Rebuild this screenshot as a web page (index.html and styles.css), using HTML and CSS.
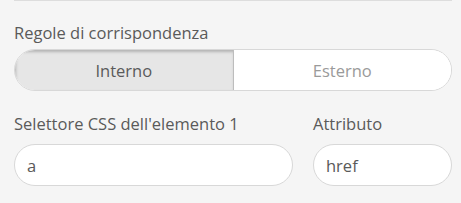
FILE: index.html
```html
<!DOCTYPE html>
<html lang="it">
<head>
    <meta charset="UTF-8">
    <title>Regole</title>
    <link rel="stylesheet" href="styles.css">
</head>
<body>
    <div class="pannello">
        <div class="campo">
            <label class="etichetta">Regole di corrispondenza</label>
            <div class="segmenti">
                <button type="button" class="segmento attivo">Interno</button>
                <button type="button" class="segmento">Esterno</button>
            </div>
        </div>
        <div class="riga">
            <div class="campo largo">
                <label class="etichetta" for="ipSelettore">Selettore CSS dell'elemento 1</label>
                <input type="text" id="ipSelettore" class="casella" value="a">
            </div>
            <div class="campo stretto">
                <label class="etichetta" for="ipAttributo">Attributo</label>
                <input type="text" id="ipAttributo" class="casella" value="href">
            </div>
        </div>
    </div>
</body>
</html>
```
FILE: styles.css
```css
body{
    margin: 0;
    background-color: #f5f5f5;
    font-family: "Open Sans", "Noto Sans", sans-serif;
    color: #5a5a5a;
}
.pannello{
    margin: 0 9px 0 14px;
    border-top: 1px solid #ddd;
    padding-top: 22px;
}
.etichetta{
    display: block;
    font-size: 16.5px;
    line-height: 20px;
    margin-bottom: 6px;
    color: #5a5a5a;
}
.segmenti{
    display: flex;
    height: 42px;
    border: 1px solid #d8d8d8;
    border-radius: 21px;
    overflow: hidden;
    background-color: #fff;
    box-sizing: border-box;
}
.segmento{
    flex: 1;
    border: none;
    background: #fff;
    font-family: inherit;
    font-size: 16.5px;
    color: #9a9a9a;
}
.segmento.attivo{
    background-color: #e6e6e6;
    color: #5a5a5a;
    border-right: 1px solid #bdbdbd;
    box-shadow: inset 1px 2px 3px rgba(0, 0, 0, 0.22);
}
.riga{
    display: flex;
    gap: 20px;
    margin-top: 23px;
}
.riga .etichetta{
    margin-bottom: 10px;
}
.largo{
    flex: 0 0 279px;
}
.stretto{
    flex: 1;
}
.casella{
    display: block;
    width: 100%;
    box-sizing: border-box;
    height: 42px;
    border: 1px solid #d8d8d8;
    border-radius: 21px;
    background-color: #fff;
    padding: 0 12px;
    font-family: inherit;
    font-size: 16.5px;
    color: #5a5a5a;
    outline: none;
}
```
